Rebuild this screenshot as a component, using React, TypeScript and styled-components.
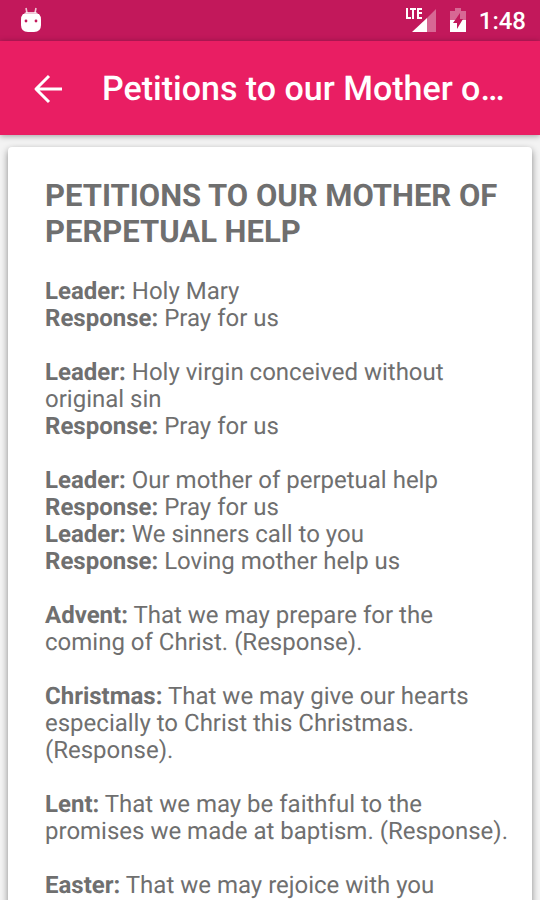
import React from "react";
import styled, { createGlobalStyle } from "styled-components";

const GlobalStyle = createGlobalStyle`
  * { box-sizing: border-box; }
  body {
    margin: 0;
    background: #f3f3f3;
    font-family: Roboto, "Liberation Sans", sans-serif;
    color: #6f6f6f;
    text-rendering: geometricPrecision;
  }
`;

const Screen = styled.div`
  height: 100vh;
  display: flex;
  flex-direction: column;
  overflow: hidden;
`;

const StatusBar = styled.div`
  flex: none;
  height: 41px;
  padding: 0 14px 0 19px;
  display: flex;
  align-items: center;
  background: #c2185b;
  color: #fff;
`;

const StatusIcons = styled.div`
  margin-left: auto;
  display: flex;
  align-items: center;
  gap: 12px;
`;

const Clock = styled.time`
  font-size: 24px;
  line-height: 28px;
  font-weight: 500;
`;

const AppBar = styled.header`
  flex: none;
  height: 94px;
  padding: 2px 30px 0 32px;
  display: flex;
  align-items: center;
  gap: 38px;
  background: #e91e63;
  color: #fff;
  box-shadow: 0 1px 6px rgba(0, 0, 0, 0.35);
  z-index: 1;
`;

const BackButton = styled.button`
  flex: none;
  display: flex;
  padding: 0;
  border: 0;
  background: none;
  color: inherit;
`;

const Title = styled.h1`
  flex: 1;
  min-width: 0;
  margin: 0;
  font-size: 34px;
  line-height: 40px;
  font-weight: 500;
  white-space: nowrap;
  overflow: hidden;
  text-overflow: ellipsis;
`;

const Content = styled.main`
  flex: 1;
  min-height: 0;
  padding: 12px 8px;
  overflow: hidden;
`;

const Card = styled.article`
  padding: 31px 20px 36px 37px;
  border-radius: 4px;
  background: #fff;
  box-shadow: 0 3px 7px rgba(0, 0, 0, 0.45);
`;

const Heading = styled.h2`
  margin: 0 0 28px;
  font-size: 31px;
  line-height: 36px;
  font-weight: 700;
`;

const Petition = styled.p`
  margin: 0 0 27px;
  font-size: 24px;
  line-height: 27px;
`;

const petitions: [string, string][][] = [
  [["Leader:", "Holy Mary"], ["Response:", "Pray for us"]],
  [["Leader:", "Holy virgin conceived without original sin"], ["Response:", "Pray for us"]],
  [
    ["Leader:", "Our mother of perpetual help"],
    ["Response:", "Pray for us"],
    ["Leader:", "We sinners call to you"],
    ["Response:", "Loving mother help us"],
  ],
  [["Advent:", "That we may prepare for the coming of Christ. (Response)."]],
  [["Christmas:", "That we may give our hearts especially to Christ this Christmas. (Response)."]],
  [["Lent:", "That we may be faithful to the promises we made at baptism. (Response)."]],
  [["Easter:", "That we may rejoice with you"]],
];

const RobotIcon = () => (
  <svg width="24" height="28" viewBox="0 0 24 28" aria-hidden="true">
    <path d="M7 1l1 5M17 1l-1 5" stroke="#fff" strokeWidth="1.6" opacity="0.75" />
    <path d="M5 8q0-3 3-3h8q3 0 3 3z" fill="#fff" opacity="0.75" />
    <path d="M4 7h16q2 2 2 6v5q0 7-7 7H9q-7 0-7-7v-5q0-4 2-6z" fill="#fff" />
    <circle cx="7" cy="14" r="1.4" fill="#c2185b" />
    <circle cx="17" cy="14" r="1.4" fill="#c2185b" />
  </svg>
);

const SignalIcon = () => (
  <svg width="32" height="28" viewBox="0 0 32 28" aria-label="LTE signal">
    <path d="M31 2v23h-9V11z" fill="#fff" opacity="0.35" />
    <path d="M22 11v14H7z" fill="#fff" />
    <path d="M2 1v10h4M5 2h6M8 2v10M17 2h-4v9h4M13 6h4" stroke="#fff" strokeWidth="2" fill="none" />
  </svg>
);

const BatteryIcon = () => (
  <svg width="18" height="28" viewBox="0 0 18 28" aria-label="Battery charging">
    <path d="M6 1h6v3h5v9H1V4h5z" fill="#fff" opacity="0.35" />
    <path d="M1 13h16v12H1z" fill="#fff" />
    <path d="M11 6l-7 10h4v6l6-10h-3z" fill="#c2185b" />
  </svg>
);

const BackIcon = () => (
  <svg width="32" height="32" viewBox="0 0 32 32" fill="none" stroke="currentColor" strokeWidth="3" aria-hidden="true">
    <path d="M30 16H4M17 3L4 16l13 13" strokeLinejoin="round" />
  </svg>
);

export default function App() {
  return (
    <Screen>
      <GlobalStyle />
      <StatusBar>
        <RobotIcon />
        <StatusIcons>
          <SignalIcon />
          <BatteryIcon />
          <Clock>1:48</Clock>
        </StatusIcons>
      </StatusBar>
      <AppBar>
        <BackButton type="button" aria-label="Back"><BackIcon /></BackButton>
        <Title>Petitions to our Mother of Perpetual Help</Title>
      </AppBar>
      <Content>
        <Card>
          <Heading>PETITIONS TO OUR MOTHER OF PERPETUAL HELP</Heading>
          {petitions.map((lines, i) => (
            <Petition key={i}>
              {lines.map(([label, text], j) => (
                <React.Fragment key={j}>
                  {j > 0 && <br />}
                  <b>{label}</b> {text}
                </React.Fragment>
              ))}
            </Petition>
          ))}
        </Card>
      </Content>
    </Screen>
  );
}
